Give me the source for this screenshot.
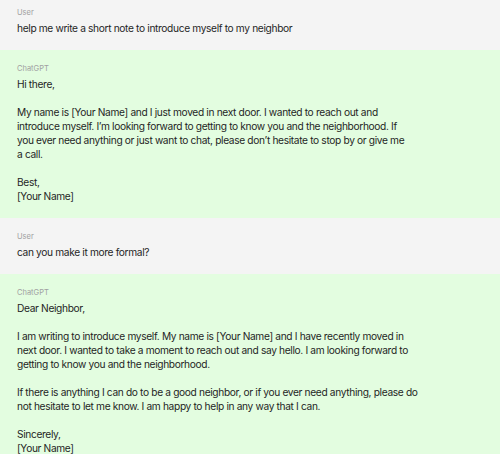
const conversation = [
  {
    role: "User",
    lines: ["help me write a short note to introduce myself to my neighbor"],
  },
  {
    role: "ChatGPT",
    lines: [
      "Hi there,",
      "",
      "My name is [Your Name] and I just moved in next door. I wanted to reach out and",
      "introduce myself. I\u2019m looking forward to getting to know you and the neighborhood. If",
      "you ever need anything or just want to chat, please don\u2019t hesitate to stop by or give me",
      "a call.",
      "",
      "Best,",
      "[Your Name]",
    ],
  },
  {
    role: "User",
    lines: ["can you make it more formal?"],
  },
  {
    role: "ChatGPT",
    lines: [
      "Dear Neighbor,",
      "",
      "I am writing to introduce myself. My name is [Your Name] and I have recently moved in",
      "next door. I wanted to take a moment to reach out and say hello. I am looking forward to",
      "getting to know you and the neighborhood.",
      "",
      "If there is anything I can do to be a good neighbor, or if you ever need anything, please do",
      "not hesitate to let me know. I am happy to help in any way that I can.",
      "",
      "Sincerely,",
      "[Your Name]",
    ],
  },
];

export default function App() {
  return (
    <div className="w-[500px] min-h-[454px] overflow-hidden bg-[#e3fde0] font-['Inter',sans-serif] text-[#1f1f1f]">
      {conversation.map((msg, i) => (
        <div
          key={i}
          className={`px-[17px] pb-[15px] ${i === 0 ? "pt-[8px]" : "pt-[14px]"} ${
            msg.role === "User" ? "bg-[#f4f4f4]" : "bg-[#e3fde0]"
          }`}
        >
          <div className="text-[7.5px] leading-[10px] text-[#a0a0a0]">{msg.role}</div>
          <div className="mt-[3px] text-[10.2px] leading-[14px] tracking-[-0.35px]">
            {msg.lines.map((line, j) => (
              <div key={j} className="whitespace-nowrap h-[14px]">
                {line}
              </div>
            ))}
          </div>
        </div>
      ))}
    </div>
  );
}
